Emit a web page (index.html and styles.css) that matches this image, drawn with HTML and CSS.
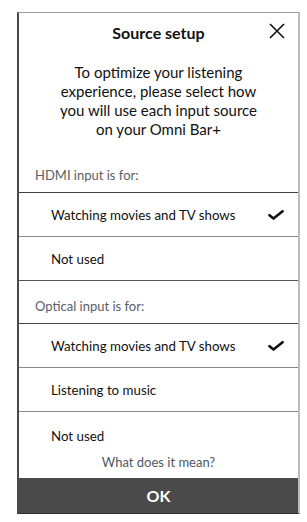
FILE: index.html
```html
<!DOCTYPE html>
<html lang="en">
<head>
  <meta charset="UTF-8" />
  <meta name="viewport" content="width=device-width, initial-scale=1.0"/>
  <title>Source setup</title>
  <link rel="stylesheet" href="styles.css">
</head>
<body>
  <div class="dialog">
    <div class="scroll">
      <div class="dialog-head">
        <h1>Source setup</h1>
        <button class="close" aria-label="Close">
          <svg width="16" height="16" viewBox="0 0 16 16"><path d="M1 1 L15 15 M15 1 L1 15" stroke="#111" stroke-width="1.6" fill="none"/></svg>
        </button>
      </div>
      <p class="intro">To optimize your listening experience, please select how you will use each input source on your Omni Bar+</p>

      <div class="group-title">HDMI input is for:</div>
      <div class="option selected">Watching movies and TV shows <span class="check"></span></div>
      <div class="option last">Not used</div>

      <div class="group-title">Optical input is for:</div>
      <div class="option selected">Watching movies and TV shows <span class="check"></span></div>
      <div class="option">Listening to music</div>
      <div class="option top-dark">Not used</div>
    </div>
    <a class="help-link" href="#">What does it mean?</a>
    <button class="ok-btn">OK</button>
  </div>

  <template id="checkIcon">
    <svg width="16" height="10" viewBox="0 0 16 10"><path d="M1.5 5.2 L5.5 8.6 L14.6 1.2" stroke="#111" stroke-width="2.6" fill="none" stroke-linecap="round" stroke-linejoin="round"/></svg>
  </template>

  <script>
    const icon = document.getElementById("checkIcon").innerHTML;
    document.querySelectorAll(".check").forEach(function (el) {
      el.innerHTML = icon;
    });
  </script>
</body>
</html>
```

FILE: styles.css
```css
body {
  font-family: Lato, 'Open Sans', sans-serif;
  background: #ffffff;
  margin: 0;
  padding: 0;
  color: #111;
}
.dialog {
  box-sizing: border-box;
  margin: 12px 0 0 17px;
  width: 283px;
  height: 502px;
  border-top: 1px solid #9a9a9a;
  border-left: 2px solid #4a4a4a;
  border-right: 2px solid #bdbdbd;
  border-bottom: 1px solid #2e2e2e;
  display: flex;
  flex-direction: column;
  background: #fff;
}
.scroll {
  flex: 1;
  overflow: hidden;
}
.dialog-head {
  position: relative;
  padding-top: 9px;
}
h1 {
  margin: 0;
  text-align: center;
  font-size: 16px;
  line-height: 22px;
  font-weight: 700;
}
.close {
  position: absolute;
  top: 10px;
  right: 13px;
  background: none;
  border: none;
  padding: 0;
  width: 16px;
  height: 16px;
  cursor: pointer;
}
.close svg {
  display: block;
}
.intro {
  margin: 19px 37px 0;
  text-align: center;
  font-size: 15px;
  line-height: 19px;
}
.group-title {
  box-sizing: border-box;
  height: 43px;
  margin-top: 11px;
  padding: 8px 16px 0;
  display: flex;
  align-items: center;
  font-size: 13px;
  color: #5a6068;
  border-bottom: 1px solid #444;
}
.option.last + .group-title {
  margin-top: 0;
}
.option {
  box-sizing: border-box;
  height: 44px;
  padding: 0 14px 0 32px;
  display: flex;
  align-items: center;
  justify-content: space-between;
  font-size: 13.3px;
  border-bottom: 1px solid #8a8a8a;
}
.option.last {
  border-bottom-color: #555;
}
.option.top-dark {
  border-bottom: none;
  padding-top: 3px;
}
.check {
  display: flex;
  width: 16px;
  height: 10px;
}
.help-link {
  display: block;
  text-align: center;
  font-size: 13px;
  line-height: 24px;
  color: #4f5863;
  text-decoration: none;
  padding-bottom: 4px;
}
.ok-btn {
  display: block;
  width: 100%;
  height: 35px;
  border: none;
  background: #4a4a4a;
  color: #fff;
  font-family: inherit;
  font-size: 16px;
  font-weight: 700;
  cursor: pointer;
}
```
